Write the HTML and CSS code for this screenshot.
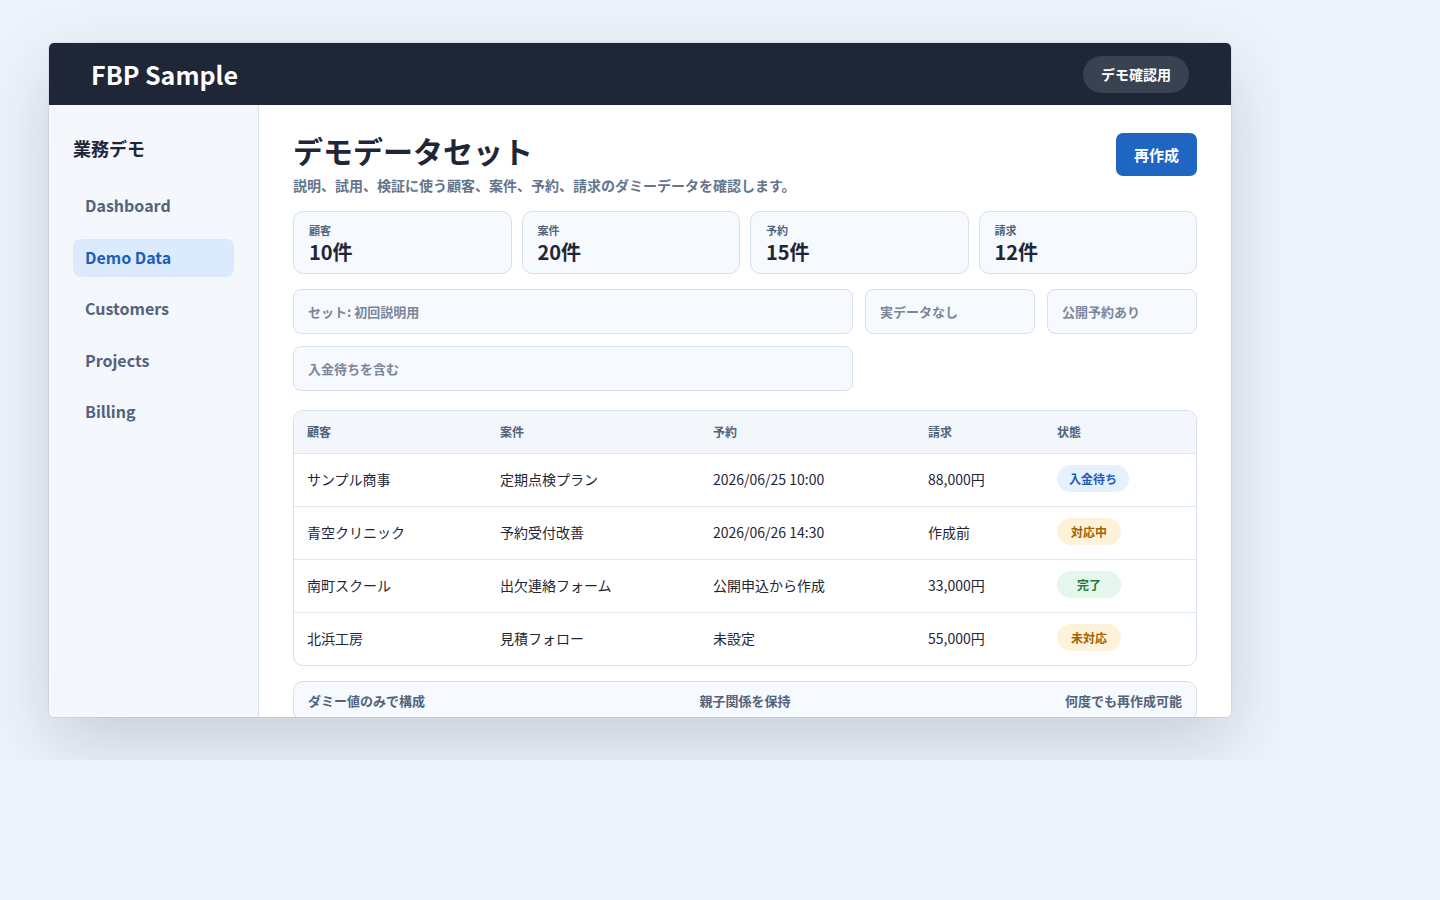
FILE: index.html
```html
<!DOCTYPE html>
<html lang="ja">
<head>
<meta charset="utf-8">
<title>FBP Sample - デモデータセット</title>
<link rel="stylesheet" href="styles.css">
</head>
<body>
<div class="stage">
  <div class="window">
    <header class="topbar">
      <div class="brand">FBP Sample</div>
      <div class="env-badge">デモ確認用</div>
    </header>
    <div class="body">
      <aside class="sidebar">
        <div class="side-title">業務デモ</div>
        <nav class="nav">
          <a class="nav-item">Dashboard</a>
          <a class="nav-item active">Demo Data</a>
          <a class="nav-item">Customers</a>
          <a class="nav-item">Projects</a>
          <a class="nav-item">Billing</a>
        </nav>
      </aside>
      <main class="main">
        <div class="page-head">
          <div class="head-text">
            <h1 class="page-title">デモデータセット</h1>
            <p class="page-sub">説明、試用、検証に使う顧客、案件、予約、請求のダミーデータを確認します。</p>
          </div>
          <button class="primary-btn">再作成</button>
        </div>

        <div class="stats">
          <div class="stat"><div class="stat-label">顧客</div><div class="stat-value">10件</div></div>
          <div class="stat"><div class="stat-label">案件</div><div class="stat-value">20件</div></div>
          <div class="stat"><div class="stat-label">予約</div><div class="stat-value">15件</div></div>
          <div class="stat"><div class="stat-label">請求</div><div class="stat-value">12件</div></div>
        </div>

        <div class="filters">
          <div class="field">セット: 初回説明用</div>
          <div class="field">実データなし</div>
          <div class="field">公開予約あり</div>
          <div class="field">入金待ちを含む</div>
        </div>

        <div class="table-wrap">
          <table class="data-table">
            <colgroup>
              <col class="c1"><col class="c2"><col class="c3"><col class="c4"><col class="c5">
            </colgroup>
            <thead>
              <tr><th>顧客</th><th>案件</th><th>予約</th><th>請求</th><th>状態</th></tr>
            </thead>
            <tbody>
              <tr><td>サンプル商事</td><td>定期点検プラン</td><td>2026/06/25 10:00</td><td>88,000円</td><td><span class="pill pill-blue">入金待ち</span></td></tr>
              <tr><td>青空クリニック</td><td>予約受付改善</td><td>2026/06/26 14:30</td><td>作成前</td><td><span class="pill pill-amber">対応中</span></td></tr>
              <tr><td>南町スクール</td><td>出欠連絡フォーム</td><td>公開申込から作成</td><td>33,000円</td><td><span class="pill pill-green">完了</span></td></tr>
              <tr><td>北浜工房</td><td>見積フォロー</td><td>未設定</td><td>55,000円</td><td><span class="pill pill-amber">未対応</span></td></tr>
            </tbody>
          </table>
        </div>

        <div class="notes">
          <span>ダミー値のみで構成</span>
          <span>親子関係を保持</span>
          <span>何度でも再作成可能</span>
        </div>
      </main>
    </div>
  </div>
</div>
</body>
</html>
```

FILE: styles.css
```css
* { box-sizing: border-box; }

html, body {
  margin: 0;
  padding: 0;
}

body {
  background: #eef3fb;
  font-family: "Noto Sans CJK JP", "Noto Sans", "Liberation Sans", sans-serif;
  color: #1e2637;
}

.stage {
  width: 1280px;
  height: 760px;
  overflow: hidden;
  padding: 43px 49px;
  background: #eef3fb;
}

.window {
  width: 1182px;
  height: 674px;
  background: #ffffff;
  border-radius: 5px;
  overflow: hidden;
  display: flex;
  flex-direction: column;
  box-shadow: 0 0 0 1px rgba(15, 23, 42, 0.06), 0 26px 70px rgba(15, 23, 42, 0.17);
}

.topbar {
  height: 62px;
  flex: none;
  background: #1e2637;
  display: flex;
  align-items: center;
  justify-content: space-between;
  padding: 0 42px;
}

.brand {
  color: #ffffff;
  font-size: 25px;
  font-weight: 700;
  line-height: 1;
}

.env-badge {
  height: 37px;
  padding: 0 18px;
  border-radius: 999px;
  background: #394251;
  color: #ffffff;
  font-size: 14px;
  font-weight: 700;
  line-height: 37px;
}

.body {
  flex: 1;
  display: flex;
  min-height: 0;
}

.sidebar {
  width: 210px;
  flex: none;
  background: #f4f7fc;
  border-right: 1px solid #d7e0eb;
  padding: 30px 24px;
}

.side-title {
  font-size: 18px;
  font-weight: 700;
  line-height: 26px;
  color: #1e2637;
  margin-bottom: 26px;
}

.nav {
  display: flex;
  flex-direction: column;
  gap: 13.5px;
}

.nav-item {
  display: block;
  height: 38px;
  line-height: 37px;
  padding: 0 12px;
  border-radius: 8px;
  font-size: 16px;
  font-weight: 700;
  color: #52637a;
}

.nav-item.active {
  background: #dbeafd;
  color: #1d5fb8;
}

.main {
  flex: 1;
  min-width: 0;
  padding: 28px 34px;
  background: #ffffff;
}

.page-head {
  display: flex;
  justify-content: space-between;
  align-items: flex-start;
}

.page-title {
  margin: 0;
  font-size: 30px;
  font-weight: 700;
  line-height: 34px;
  color: #1e2637;
}

.page-sub {
  margin: 8px 0 0;
  font-size: 14px;
  font-weight: 700;
  line-height: 20px;
  color: #64748b;
}

.primary-btn {
  height: 43px;
  padding: 0 18px;
  border: none;
  border-radius: 7px;
  background: #1f65c2;
  color: #ffffff;
  font-family: inherit;
  font-size: 15px;
  font-weight: 700;
}

.stats {
  margin-top: 16px;
  display: grid;
  grid-template-columns: repeat(4, 1fr);
  gap: 10px;
}

.stat {
  height: 63px;
  padding: 10px 15px 0;
  background: #f6f9fd;
  border: 1px solid #d6e0ec;
  border-radius: 10px;
}

.stat-label {
  font-size: 11px;
  font-weight: 700;
  line-height: 16px;
  color: #52637a;
}

.stat-value {
  font-size: 20px;
  font-weight: 700;
  line-height: 28px;
  color: #1e2637;
}

.filters {
  margin-top: 15px;
  display: grid;
  grid-template-columns: minmax(0, 1fr) 170px 150px;
  gap: 12px;
}

.field {
  height: 45px;
  display: flex;
  align-items: center;
  padding: 0 14px;
  background: #f6f9fd;
  border: 1px solid #d6e0ec;
  border-radius: 8px;
  font-size: 13px;
  font-weight: 700;
  color: #7b8799;
}

.table-wrap {
  margin-top: 19px;
  border: 1px solid #d6e0ec;
  border-radius: 10px;
  overflow: hidden;
}

.data-table {
  width: 100%;
  border-collapse: collapse;
  table-layout: fixed;
}

.c1 { width: 193px; }
.c2 { width: 213px; }
.c3 { width: 215px; }
.c4 { width: 129px; }

.data-table th {
  height: 42px;
  padding: 0 13px;
  text-align: left;
  font-size: 12px;
  font-weight: 700;
  color: #52637a;
  background: #f3f6fa;
  border-bottom: 1px solid #e1e8f0;
}

.data-table td {
  height: 53px;
  padding: 0 13px 2px;
  font-size: 14px;
  font-weight: 400;
  color: #1e2637;
  border-bottom: 1px solid #e1e8f0;
}

.data-table tbody tr:last-child td {
  border-bottom: none;
}

.pill {
  display: inline-block;
  min-width: 64px;
  height: 27px;
  line-height: 27px;
  padding: 0 12px;
  border-radius: 999px;
  text-align: center;
  font-size: 12px;
  font-weight: 700;
}

.pill-blue { background: #e6f0fe; color: #1d5fb8; }
.pill-amber { background: #fef3da; color: #a36306; }
.pill-green { background: #e5f6ea; color: #1c7a40; }

.notes {
  margin-top: 15px;
  display: flex;
  justify-content: space-between;
  padding: 10px 14px;
  background: #f6f9fd;
  border: 1px solid #d6e0ec;
  border-radius: 10px;
  font-size: 13px;
  font-weight: 700;
  line-height: 18px;
  color: #52637a;
}
```
